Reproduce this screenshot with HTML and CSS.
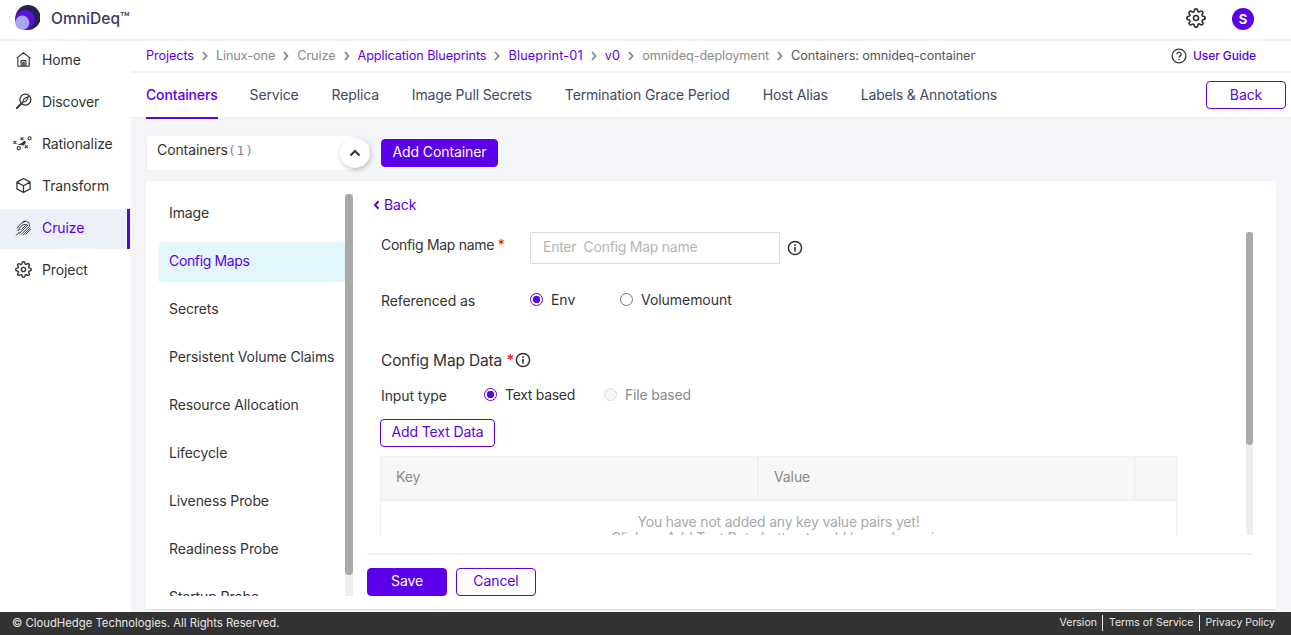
FILE: index.html
```html
<!DOCTYPE html>
<html lang="en">
<head>
<meta charset="utf-8">
<title>OmniDeq</title>
<link rel="stylesheet" href="styles.css">
</head>
<body>
<svg class="defs" width="0" height="0" aria-hidden="true">
  <symbol id="gear" viewBox="0 0 24 24"><circle cx="12" cy="12" r="3" fill="none" stroke="currentColor" stroke-width="2"/><path fill="none" stroke="currentColor" stroke-width="2" stroke-linejoin="round" d="M19.4 15a1.65 1.65 0 0 0 .33 1.82l.06.06a2 2 0 0 1 0 2.83 2 2 0 0 1-2.83 0l-.06-.06a1.65 1.65 0 0 0-1.82-.33 1.65 1.65 0 0 0-1 1.51V21a2 2 0 0 1-2 2 2 2 0 0 1-2-2v-.09A1.65 1.65 0 0 0 9 19.4a1.65 1.65 0 0 0-1.82.33l-.06.06a2 2 0 0 1-2.83 0 2 2 0 0 1 0-2.83l.06-.06a1.65 1.65 0 0 0 .33-1.82 1.65 1.65 0 0 0-1.51-1H3a2 2 0 0 1-2-2 2 2 0 0 1 2-2h.09A1.65 1.65 0 0 0 4.6 9a1.65 1.65 0 0 0-.33-1.82l-.06-.06a2 2 0 0 1 0-2.83 2 2 0 0 1 2.83 0l.06.06a1.65 1.65 0 0 0 1.82.33H9a1.65 1.65 0 0 0 1-1.51V3a2 2 0 0 1 2-2 2 2 0 0 1 2 2v.09a1.65 1.65 0 0 0 1 1.51 1.65 1.65 0 0 0 1.82-.33l.06-.06a2 2 0 0 1 2.83 0 2 2 0 0 1 0 2.83l-.06.06a1.65 1.65 0 0 0-.33 1.82V9a1.65 1.65 0 0 0 1.51 1H21a2 2 0 0 1 2 2 2 2 0 0 1-2 2h-.09a1.65 1.65 0 0 0-1.51 1z"/></symbol>
  <symbol id="info" viewBox="0 0 16 16"><circle cx="8" cy="8" r="6.6" fill="none" stroke="currentColor" stroke-width="1.5"/><rect x="7.2" y="7" width="1.6" height="4.6" fill="currentColor"/><rect x="7.2" y="4.3" width="1.6" height="1.6" fill="currentColor"/></symbol>
  <symbol id="crumb" viewBox="0 0 8 10"><path d="M2 1l3.5 4L2 9" fill="none" stroke="currentColor" stroke-width="1.8"/></symbol>
</svg>

<header class="topbar">
  <div class="brand">
    <svg class="logo" viewBox="0 0 24 24" width="25" height="25" aria-hidden="true">
      <circle cx="12.5" cy="12" r="12" fill="#26214f"/>
      <circle cx="9.5" cy="14" r="9.5" fill="#5a12d6"/>
      <circle cx="7" cy="17" r="6.8" fill="#a9a4f3"/>
    </svg>
    <span class="brand-name">OmniDeq™</span>
  </div>
  <div class="top-actions">
    <svg class="top-gear" width="20" height="20"><use href="#gear"/></svg>
    <span class="avatar">S</span>
  </div>
</header>

<div class="shell">
  <nav class="sidebar">
    <a class="side-item">
      <svg class="side-icon" viewBox="0 0 18 18"><path d="M1.800 7.600L9 1.800l7.200 5.800M3 6.800V16.200h12V6.800M6.500 16.200v-6h5v6M8.300 16.200v-4h1.400v4" fill="none" stroke="currentColor" stroke-width="1.200" stroke-linejoin="round"/></svg>
      <span>Home</span>
    </a>
    <a class="side-item">
      <svg class="side-icon" viewBox="0 0 18 18"><circle cx="11" cy="7" r="5.800" fill="none" stroke="currentColor" stroke-width="1.300"/><path d="M6.800 11.200L2 16" stroke="currentColor" stroke-width="2.200" stroke-linecap="round"/><path d="M14 4l-1.800 4.200L8 10l1.800-4.200z" fill="none" stroke="currentColor" stroke-width="1.100"/></svg>
      <span>Discover</span>
    </a>
    <a class="side-item">
      <svg class="side-icon wide" viewBox="0 0 20 18"><path d="M0.500 6.500l3 3M3.500 6.500l-3 3M8 2.500l3 3M11 2.500l-3 3M12.500 11l3 3M15.500 11l-3 3" stroke="currentColor" stroke-width="1.200" fill="none"/><circle cx="17.500" cy="3.500" r="1.700" fill="none" stroke="currentColor" stroke-width="1.100"/><circle cx="6" cy="14" r="1.700" fill="none" stroke="currentColor" stroke-width="1.100"/><path d="M4.500 10.500l4.500-2 3-2.500 2 1.500-2.500 3.500-3.500-.5z" fill="currentColor"/></svg>
      <span>Rationalize</span>
    </a>
    <a class="side-item">
      <svg class="side-icon" viewBox="0 0 18 18"><path d="M9 1.500l7 3.900v7.200l-7 3.900-7-3.900V5.400zM2 5.400L9 9.200l7-3.800M9 9.200v7.200" fill="none" stroke="currentColor" stroke-width="1.300" stroke-linejoin="round"/></svg>
      <span>Transform</span>
    </a>
    <a class="side-item active">
      <svg class="side-icon" viewBox="0 0 18 18"><path d="M1.500 17l3-3M3 12.500l1.800-1.800M2.500 9.500C4 6.500 7 3.500 11 2.500M4.500 15.500l9-9c-2.500-1.500-5.500-.5-7.500 1.500l-2 2.500M6.500 16.500L15 8c.5-1.500.5-2.500 0-3.500-1.500-2-4-2.500-6-2M9 16.500l7-7M11.500 16l5-5M7 11l4-4" fill="none" stroke="#333" stroke-width="1" stroke-linecap="round"/></svg>
      <span>Cruize</span>
    </a>
    <a class="side-item">
      <svg class="side-icon" viewBox="0 0 24 24"><use href="#gear"/></svg>
      <span>Project</span>
    </a>
  </nav>

  <main class="content">
    <div class="crumbs">
      <a class="link">Projects</a><svg class="sep"><use href="#crumb"/></svg>
      <span>Linux-one</span><svg class="sep"><use href="#crumb"/></svg>
      <span>Cruize</span><svg class="sep"><use href="#crumb"/></svg>
      <a class="link">Application Blueprints</a><svg class="sep"><use href="#crumb"/></svg>
      <a class="link spaced">Blueprint-01</a><svg class="sep"><use href="#crumb"/></svg>
      <a class="link spaced">v0</a><svg class="sep"><use href="#crumb"/></svg>
      <span>omnideq-deployment</span><svg class="sep"><use href="#crumb"/></svg>
      <span class="crumb-last">Containers: omnideq-container</span>
      <a class="guide">
        <svg viewBox="0 0 16 16" width="16" height="16"><circle cx="8" cy="8" r="6.900" fill="none" stroke="#333" stroke-width="1.300"/><path d="M5.900 6.300a2.100 2.100 0 1 1 3.200 1.800c-.7.400-1.100.8-1.100 1.500" fill="none" stroke="#333" stroke-width="1.300"/><rect x="7.300" y="10.800" width="1.400" height="1.400" fill="#333"/></svg>
        <span>User Guide</span>
      </a>
    </div>

    <div class="tabs">
      <a class="tab current">Containers</a>
      <a class="tab">Service</a>
      <a class="tab">Replica</a>
      <a class="tab">Image Pull Secrets</a>
      <a class="tab">Termination Grace Period</a>
      <a class="tab">Host Alias</a>
      <a class="tab">Labels &amp; Annotations</a>
      <button class="btn outline back-btn">Back</button>
    </div>

    <div class="workspace">
      <div class="container-bar">
        <div class="selector">
          <span>Containers<span class="count">(1)</span></span>
          <span class="toggle"><svg width="12" height="8" viewBox="0 0 12 8"><path d="M1.500 6.500L6 2l4.500 4.500" fill="none" stroke="#333" stroke-width="2"/></svg></span>
        </div>
        <button class="btn solid add-container">Add Container</button>
      </div>

      <section class="card">
        <div class="menu-wrap">
          <ul class="menu">
            <li>Image</li>
            <li class="selected">Config Maps</li>
            <li>Secrets</li>
            <li>Persistent Volume Claims</li>
            <li>Resource Allocation</li>
            <li>Lifecycle</li>
            <li>Liveness Probe</li>
            <li>Readiness Probe</li>
            <li>Startup Probe</li>
          </ul>
          <div class="scroll menu-scroll"><div class="thumb"></div></div>
        </div>

        <div class="detail">
          <a class="back-link"><svg width="7" height="10" viewBox="0 0 7 10"><path d="M5.500 1.200L2 5l3.500 3.800" fill="none" stroke="currentColor" stroke-width="2"/></svg>Back</a>
          <div class="form-wrap">
            <div class="form">
              <div class="row name-row">
                <label class="label">Config Map name <em>*</em></label>
                <div class="input">Enter&nbsp; Config Map name</div>
                <svg class="info" width="16" height="16"><use href="#info"/></svg>
              </div>
              <div class="row ref-row">
                <span class="label">Referenced as</span>
                <span class="radio on"></span><span class="radio-text env">Env</span>
                <span class="radio"></span><span class="radio-text">Volumemount</span>
              </div>
              <div class="row data-row">
                <h2>Config Map Data <em>*</em></h2>
                <svg class="info" width="16" height="16"><use href="#info"/></svg>
              </div>
              <div class="row type-row">
                <span class="label">Input type</span>
                <span class="radio on"></span><span class="radio-text text-based">Text based</span>
                <span class="radio off"></span><span class="radio-text muted">File based</span>
              </div>
              <button class="btn outline add-text">Add Text Data</button>
              <div class="table">
                <div class="thead">
                  <div class="th key">Key</div>
                  <div class="th val">Value</div>
                  <div class="th act"></div>
                </div>
                <div class="empty">You have not added any key value pairs yet!<br>Click on Add Text Data button to add key value pairs</div>
              </div>
            </div>
            <div class="scroll form-scroll"><div class="thumb"></div></div>
          </div>
          <div class="actions">
            <button class="btn solid wide-btn">Save</button>
            <button class="btn outline wide-btn">Cancel</button>
          </div>
        </div>
      </section>
    </div>
  </main>
</div>

<footer class="footer">
  <span class="copy">© CloudHedge Technologies. All Rights Reserved.</span>
  <div class="foot-links"><a>Version</a><a>Terms of Service</a><a>Privacy Policy</a></div>
</footer>
</body>
</html>
```

FILE: styles.css
```css
* { box-sizing: border-box; }
html, body { margin: 0; height: 635px; overflow: hidden; }
body {
  font-family: Inter, "Noto Sans", sans-serif;
  font-size: 14px;
  letter-spacing: -0.1px;
  color: #333;
  background: #fff;
  display: flex;
  flex-direction: column;
}
.defs { position: absolute; }
a { color: inherit; text-decoration: none; }
ul { list-style: none; margin: 0; padding: 0; }
em { color: #f00; font-style: normal; }

.topbar {
  height: 41px;
  flex: none;
  display: flex;
  align-items: center;
  justify-content: space-between;
  padding: 0 37px 3px 15px;
  border-bottom: 2px solid #f3eff1;
}
.brand { display: flex; align-items: center; gap: 11px; }
.logo { display: block; margin-top: -2px; }
.brand-name { font-size: 15.5px; font-weight: 500; color: #3c3861; letter-spacing: 0.05px; }
.top-actions { display: flex; align-items: center; gap: 26px; }
.top-gear { color: #333; display: block; }
.avatar {
  width: 22px; height: 22px; border-radius: 50%;
  background: #5b00e8; color: #fff;
  font-size: 13px; font-weight: 700;
  display: flex; align-items: center; justify-content: center;
  margin-top: 2px;
}

.shell { flex: 1; display: flex; min-height: 0; }
.sidebar {
  width: 131px; flex: none;
  display: flex; flex-direction: column; gap: 2px;
  background: #fff;
}
.side-item {
  height: 40px;
  display: flex; align-items: center; gap: 10px;
  padding: 0 0 4px 15px;
  margin-right: 1px;
}
.side-icon { width: 17px; height: 17px; flex: none; color: #333; }
.side-icon.wide { width: 19px; margin-left: -2px; margin-right: 0; }
.side-item.active {
  background: #ecf0f9;
  color: #5b00e8;
  border-right: 3px solid #5b00e8;
}

.content { flex: 1; min-width: 0; display: flex; flex-direction: column; }
.crumbs {
  height: 32px; flex: none;
  display: flex; align-items: center;
  padding: 0 35px 1px 15px;
  border-bottom: 2px solid #f3f3f3;
  font-size: 12.7px;
  color: #8a8a8a;
}
.crumbs .link { color: #5b00e8; }
.crumbs .spaced { letter-spacing: 0.15px; }
.sep { width: 8px; height: 10px; margin: 0 7px 0 7px; color: #888; flex: none; }
.crumb-last { color: #555; }
.guide {
  margin-left: auto;
  display: flex; align-items: center; gap: 6px;
  color: #5b00e8; font-weight: 500; font-size: 12px;
}

.tabs {
  height: 46px; flex: none;
  display: flex; align-items: center; gap: 33px;
  padding-left: 15px; padding-right: 5px;
  border-bottom: 2px solid #f1f1f1;
}
.tab {
  height: 46px; display: flex; align-items: center;
  letter-spacing: -0.15px;
  color: #3e4766;
  border-bottom: 2px solid transparent;
  margin-bottom: -1px;
}
.tab.current { color: #5b00e8; font-weight: 500; border-bottom-color: #5b00e8; margin-right: -1px; }

.btn {
  font: inherit; letter-spacing: inherit;
  height: 28px; padding: 0 0 3px;
  border-radius: 4px; cursor: pointer;
  display: inline-flex; align-items: center; justify-content: center;
}
.btn.solid { background: #5b00e8; border: 1px solid #5b00e8; color: #fff; }
.btn.outline { background: #fff; border: 1px solid #5b00e8; color: #5b00e8; }
.back-btn { width: 80px; margin-left: auto; padding-bottom: 1px; }
.wide-btn { width: 80px; }

.workspace {
  flex: 1; min-height: 0;
  background: #f4f5f8;
  padding: 16px 15px 0 15px;
  display: flex; flex-direction: column;
}
.container-bar { display: flex; align-items: flex-start; height: 46px; flex: none; }
.selector {
  width: 209px; height: 36px;
  background: #fff;
  border: 1px solid #f1f1f4;
  border-radius: 3px;
  display: flex; align-items: center;
  padding: 0 0 7px 10px;
  position: relative;
}
.count { color: #888; font-family: "DejaVu Sans Mono", monospace; font-size: 13px; margin-left: 0; letter-spacing: 0.8px; }
.toggle {
  width: 30px; height: 30px; border-radius: 50%;
  background: #fff;
  box-shadow: 1px 2px 5px rgba(0,0,0,.22);
  display: flex; align-items: center; justify-content: center;
  position: absolute;
  right: -16px; top: 2px;
}
.add-container { margin: 4px 0 0 26px; width: 117px; }

.card {
  height: 429px; flex: none;
  background: #fff;
  display: flex;
  padding: 0 23px 0 13px;
  border-bottom: 1px solid #ddd;
}
.menu-wrap { width: 194px; flex: none; display: flex; height: 415px; padding-top: 13px; }
.menu { width: 186px; height: 402px; overflow: hidden; flex: none; }
.menu li {
  height: 40px; margin-bottom: 8px;
  display: flex; align-items: center;
  padding: 0 0 3px 10px;
  white-space: nowrap;
}
.menu li.selected { background: #e3f6fc; color: #5b00e8; letter-spacing: -0.35px; }

.scroll { width: 8px; flex: none; background: #eee; }
.thumb { background: #a9a9a9; border-radius: 4px; }
.menu-scroll .thumb { height: 381px; }
.form-scroll { height: 303px; width: 7px; }
.form-scroll .thumb { height: 213px; }

.detail { flex: 1; min-width: 0; margin-left: 14px; display: flex; flex-direction: column; }
.back-link {
  height: 51px; flex: none;
  display: flex; align-items: flex-start; gap: 4px;
  padding: 15px 0 0 6px;
  color: #5b00e8;
}
.back-link svg { margin-top: 4px; }
.form-wrap {
  height: 303px; flex: none;
  display: flex; justify-content: space-between;
}
.form { width: 810px; height: 303px; overflow: hidden; padding-left: 14px; flex: none; }
.row { display: flex; align-items: center; }
.label { flex: none; }
.name-row { height: 32px; align-items: flex-start; }
.name-row .label { width: 149px; padding-top: 4px; letter-spacing: -0.3px; }
.input {
  width: 250px; height: 32px;
  border: 1px solid #d9d9d9; border-radius: 2px;
  padding: 0 12px 3px;
  display: flex; align-items: center;
  color: #b5b5b5;
  letter-spacing: -0.26px;
}
.name-row .info { margin: 8px 0 0 7px; }
.info { color: #333; flex: none; }
.ref-row { height: 24px; margin-top: 24px; }
.ref-row .label { width: 149px; }
.radio {
  width: 13px; height: 13px; border-radius: 50%;
  border: 1px solid #777;
  background: #fff; flex: none;
  margin-top: -2px;
}
.radio.on { border-color: #5b00e8; background: radial-gradient(circle, #5b00e8 0 3.4px, #fff 4px); }
.radio.off { border-color: #ddd; background: #f6f6f6; }
.radio-text { margin-left: 8px; margin-top: -2px; letter-spacing: -0.05px; }
.radio-text.env { width: 69px; }
.radio-text.text-based { width: 99px; letter-spacing: -0.3px; }
.radio-text.muted { color: #8a8a8a; letter-spacing: -0.2px; }
.data-row { height: 24px; margin-top: 36px; gap: 1px; }
h2 { margin: 0; font-size: 15.5px; font-weight: 400; letter-spacing: -0.15px; }
.type-row { height: 22px; margin-top: 12px; }
.type-row .label { width: 103px; padding-top: 1px; }
.add-text { margin: 13px 0 9px -1px; width: 115px; display: flex; }
.table { width: 797px; margin-left: -1px; border: 1px solid #f0f0f0; }
.thead { height: 44px; display: flex; background: #f7f7f7; border-bottom: 2px solid #f0f0f0; }
.th { display: flex; align-items: center; padding: 0 0 3px 15px; color: #8a8a8a; border-right: 2px solid #f0f0f0; }
.th.key { width: 378px; }
.th.val { width: 377px; }
.th.act { flex: 1; border-right: 0; }
.empty { text-align: center; color: #aaa; padding-top: 13px; line-height: 16px; letter-spacing: -0.2px; }

.actions {
  margin-top: 18px;
  border-top: 2px solid #f1f1f1;
  padding-top: 13px;
  display: flex; gap: 9px;
}

.footer {
  height: 23px; flex: none;
  background: #333; color: #e8e8e8;
  display: flex; align-items: center; justify-content: space-between;
  padding: 0 16px 1px 12px;
  font-size: 10.5px;
  letter-spacing: 0;
}
.copy { font-size: 11.3px; }
.foot-links { display: flex; }
.foot-links a { padding: 0 5px 0 6px; line-height: 16px; border-left: 1px solid #eee; }
.foot-links a:first-child { border-left: 0; }
.foot-links a:last-child { padding-right: 0; }
```
